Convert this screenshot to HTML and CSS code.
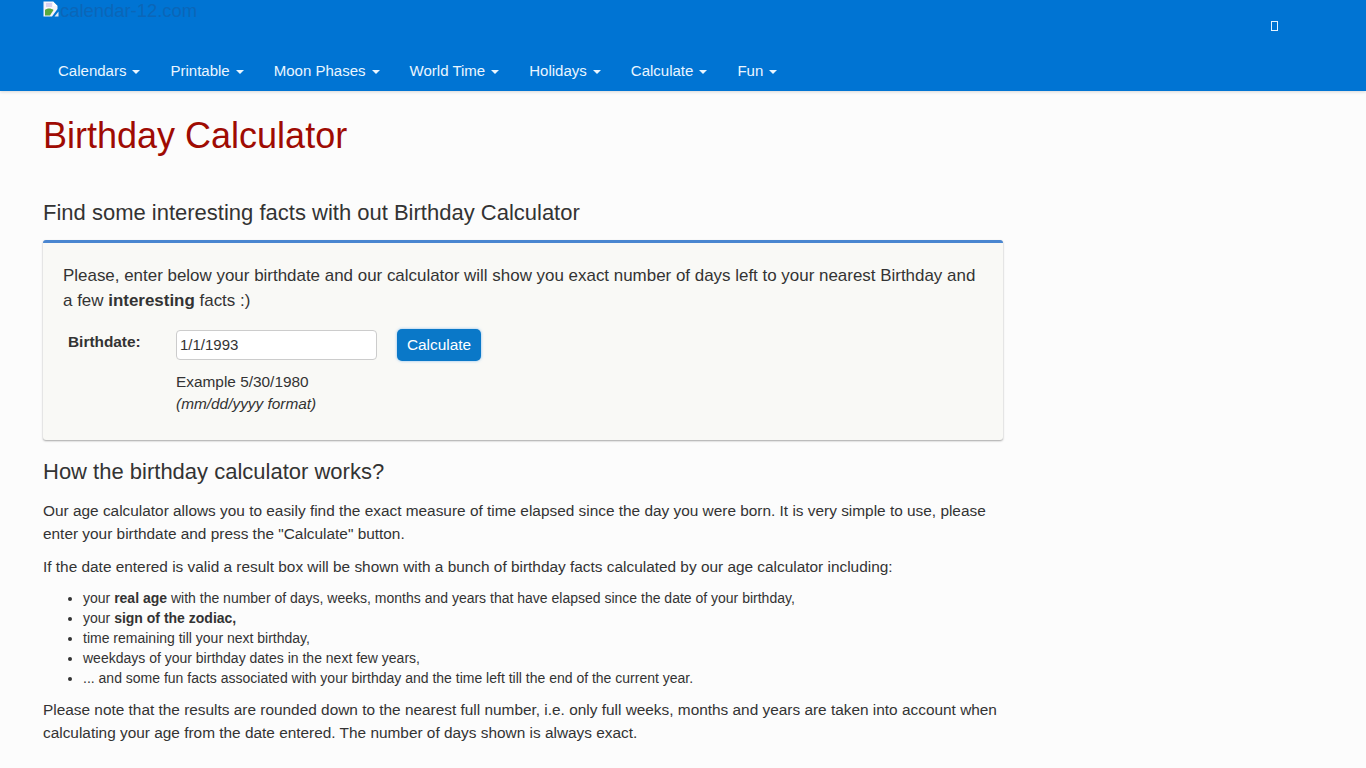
FILE: index.html
```html
<!DOCTYPE html>
<html lang="en">
<head>
<meta charset="utf-8">
<title>Birthday Calculator</title>
<link rel="stylesheet" href="styles.css">
</head>
<body>
<header class="site-header">
  <div class="top-row">
    <a class="logo" href="#">
      <svg class="broken-img" width="16" height="16" viewBox="0 0 16 16" aria-hidden="true">
        <path d="M0.5 0.5H10L14.5 5V8L9 15.5H0.5Z" fill="#f6f4fa"/>
        <path d="M2 9C4 7 8 7 10.5 9L7 14.5H2Z" fill="#58a83e"/>
        <path d="M3 2H9V6H3Z" fill="#d8d0f0"/>
        <path d="M10 0.5V5H14.5Z" fill="#ffffff"/>
        <path d="M11.5 15.5L15.5 10.5V15.5Z" fill="#dfe6f0"/>
      </svg><span class="logo-alt">calendar-12.com</span>
    </a>
    <span class="tofu" aria-hidden="true"></span>
  </div>
  <nav class="main-nav">
    <a href="#">Calendars<i class="caret"></i></a>
    <a href="#">Printable<i class="caret"></i></a>
    <a href="#">Moon Phases<i class="caret"></i></a>
    <a href="#">World Time<i class="caret"></i></a>
    <a href="#">Holidays<i class="caret"></i></a>
    <a href="#">Calculate<i class="caret"></i></a>
    <a href="#">Fun<i class="caret"></i></a>
  </nav>
</header>
<main class="content">
  <h1>Birthday Calculator</h1>
  <h2 class="lead-title">Find some interesting facts with out Birthday Calculator</h2>
  <section class="panel">
    <p class="panel-text">Please, enter below your birthdate and our calculator will show you exact number of days left to your nearest Birthday and a few <b>interesting</b> facts :)</p>
    <div class="form-row">
      <label class="form-label" for="bd">Birthdate:</label>
      <div class="form-fields">
        <div class="input-line">
          <input id="bd" class="date-input" type="text" value="1/1/1993">
          <button class="calc-btn" type="button">Calculate</button>
        </div>
        <div class="hint">Example 5/30/1980<br><em>(mm/dd/yyyy format)</em></div>
      </div>
    </div>
  </section>
  <h2 class="how-title">How the birthday calculator works?</h2>
  <p>Our age calculator allows you to easily find the exact measure of time elapsed since the day you were born. It is very simple to use, please enter your birthdate and press the "Calculate" button.</p>
  <p>If the date entered is valid a result box will be shown with a bunch of birthday facts calculated by our age calculator including:</p>
  <ul>
    <li>your <b>real age</b> with the number of days, weeks, months and years that have elapsed since the date of your birthday,</li>
    <li>your <b>sign of the zodiac,</b></li>
    <li>time remaining till your next birthday,</li>
    <li>weekdays of your birthday dates in the next few years,</li>
    <li>... and some fun facts associated with your birthday and the time left till the end of the current year.</li>
  </ul>
  <p>Please note that the results are rounded down to the nearest full number, i.e. only full weeks, months and years are taken into account when calculating your age from the date entered. The number of days shown is always exact.</p>
</main>
</body>
</html>
```
FILE: styles.css
```css
* { box-sizing: border-box; }
html, body { margin: 0; padding: 0; }
body {
  background: #fcfcfc;
  color: #333;
  font-family: "Liberation Sans", Arial, sans-serif;
  font-size: 15.4px;
  line-height: 23px;
  overflow: hidden;
  height: 768px;
}
.site-header {
  height: 91px;
  background: #0074d3;
  box-shadow: 0 1px 3px rgba(0,0,0,.15);
  padding: 0 0 0 43px;
}
.top-row {
  height: 51px;
  display: flex;
  justify-content: space-between;
  align-items: flex-start;
}
.logo { display: flex; align-items: flex-start; text-decoration: none; line-height: 20px; margin-top: 1px; }
.broken-img { display: block; flex: none; }
.logo-alt { font-size: 18.4px; color: #0b66b8; margin-left: 1px; }
.tofu {
  width: 7px; height: 10px;
  border: 1px solid #e6f4ff;
  margin: 21px 88px 0 0;
}
.main-nav { display: flex; height: 40px; margin-left: 15px; gap: 30px; align-items: center; }
.main-nav a { color: #eaf6ff; text-decoration: none; font-size: 15.03px; line-height: 40px; white-space: nowrap; }
.caret {
  display: inline-block;
  width: 0; height: 0;
  margin-left: 6px;
  vertical-align: middle;
  border-top: 4px solid #eaf6ff;
  border-left: 4px solid transparent;
  border-right: 4px solid transparent;
}
.content { width: 960px; margin-left: 43px; }
h1 {
  margin: 22px 0 0;
  font-size: 36px;
  line-height: 46px;
  font-weight: 400;
  color: #9f0b03;
}
h2 { font-weight: 400; color: #333; font-size: 22px; line-height: 28px; margin: 0; }
.lead-title { margin-top: 40px; }
.panel {
  margin-top: 13px;
  height: 200px;
  background: #f9f9f6;
  border-top: 3px solid #4a86d0;
  border-radius: 3px;
  box-shadow: 0 1px 2px rgba(0,0,0,.35);
  padding: 20px;
}
.panel-text { margin: 0; font-size: 16.94px; line-height: 25px; }
.form-row { display: flex; margin-top: 16px; }
.form-label { width: 108px; margin-left: 5px; font-weight: 700; font-size: 15.4px; line-height: 26px; flex: none; }
.input-line { display: flex; align-items: center; gap: 20px; height: 32px; }
.date-input {
  width: 201px; height: 30px;
  border: 1px solid #ccc;
  border-radius: 4px;
  background: #fff;
  color: #333;
  font: 15px "Liberation Sans", Arial, sans-serif;
  padding: 0 3px 2px;
}
.calc-btn {
  width: 84px; height: 32px;
  border: 0;
  border-radius: 5px;
  background: #0a78c8;
  color: #fff;
  font: 15.4px "Liberation Sans", Arial, sans-serif;
  box-shadow: 0 0 3px rgba(60,150,230,.6);
  padding: 0;
}
.hint { margin-top: 10px; line-height: 22px; }
.how-title { margin-top: 18px; }
p { margin: 0 0 10px; }
.how-title + p { margin-top: 13px; }
ul { margin: 0 0 10px; padding-left: 40px; font-size: 14px; line-height: 20px; }
```
